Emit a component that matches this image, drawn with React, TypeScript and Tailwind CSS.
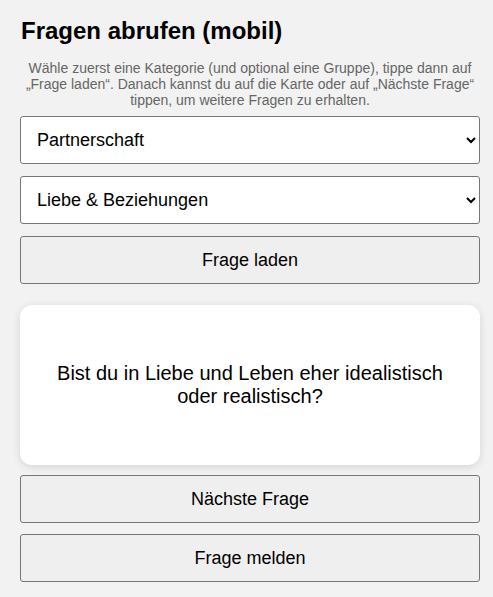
import React, { useState } from 'react';

const categories = ['Partnerschaft', 'Freundschaft', 'Familie'];
const groups = ['Liebe & Beziehungen', 'Alltag', 'Zukunft'];

const App: React.FC = () => {
  const [category, setCategory] = useState(categories[0]);
  const [group, setGroup] = useState(groups[0]);

  const btnClass =
    'w-full h-[48px] rounded-[3px] border border-[#767676] bg-[#efefef] text-[18px] text-black';
  const selectClass =
    'w-full h-[48px] rounded-[3px] border border-[#767676] bg-white pl-[12px] pr-1 text-[18px] text-black';

  return (
    <div className="h-[597px] overflow-hidden bg-[#f2f2f2] pl-5 pt-[17px] font-['Liberation_Sans',Arial,sans-serif] text-black">
      <div className="w-[460px]">
        {/* Header */}
        <h1 className="text-[24px] leading-[28px] font-bold px-px">Fragen abrufen (mobil)</h1>
        <p className="mt-[15px] text-center text-[14px] leading-[16px] text-[#666666]">
          Wähle zuerst eine Kategorie (und optional eine Gruppe), tippe dann auf „Frage laden“. Danach kannst du auf die
          Karte oder auf „Nächste Frage“ tippen, um weitere Fragen zu erhalten.
        </p>

        {/* Controls */}
        <div className="mt-[8px] flex flex-col gap-3">
          <select value={category} onChange={(e) => setCategory(e.target.value)} className={selectClass}>
            {categories.map((c) => (
              <option key={c}>{c}</option>
            ))}
          </select>
          <select value={group} onChange={(e) => setGroup(e.target.value)} className={selectClass}>
            {groups.map((g) => (
              <option key={g}>{g}</option>
            ))}
          </select>
          <button className={btnClass}>Frage laden</button>
        </div>

        {/* Question card */}
        <div className="mt-[21px] h-[160px] rounded-[12px] bg-white shadow-[0_2px_8px_rgba(0,0,0,0.12)] flex items-center justify-center px-8 text-center text-[20px] leading-[23px]">
          Bist du in Liebe und Leben eher idealistisch oder realistisch?
        </div>

        <div className="mt-[10px] flex flex-col gap-[11px]">
          <button className={btnClass}>Nächste Frage</button>
          <button className={btnClass}>Frage melden</button>
        </div>
      </div>
    </div>
  );
};

export default App;
